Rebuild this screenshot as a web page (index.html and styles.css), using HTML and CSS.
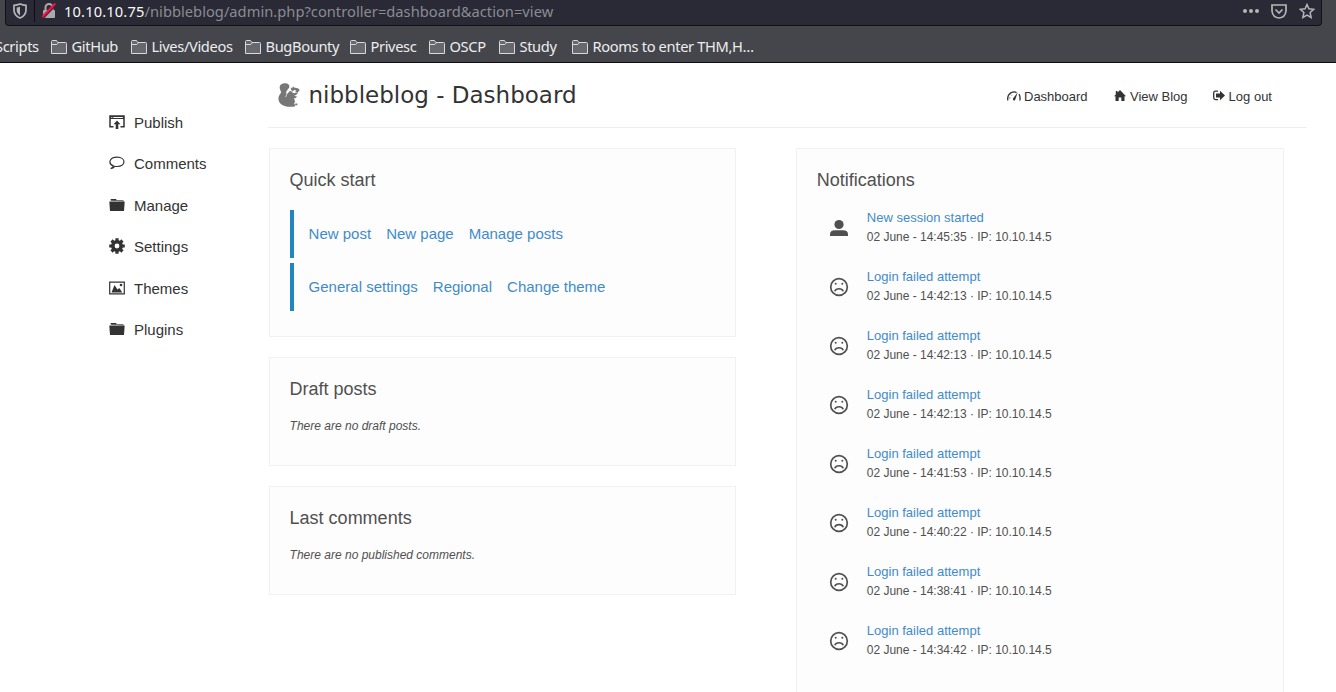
FILE: index.html
```html
<!DOCTYPE html>
<html lang="en">
<head>
<meta charset="utf-8">
<title>nibbleblog - Dashboard</title>
<link rel="stylesheet" href="styles.css">
</head>
<body>
<svg class="sprite" aria-hidden="true">
  <symbol id="dir" viewBox="0 0 16 14"><path d="M.5 13.500V1.500q0-1 1-1h4l1.300 2h7.700q1 0 1 1v10z" fill="#67686d" stroke="#d8d8da"/><path d="M.5 4.500h5.300l1.400-1.500" fill="none" stroke="#d8d8da"/></symbol>
  <symbol id="folder" viewBox="0 0 16 14"><path d="M1.500 2.500V1h5.500l1 1h6.500v1.500z" fill="#777"/><path d="M2 1h5v1.600H2zM.3 3.500h15.400L15 13H1z"/></symbol>
  <symbol id="sad" viewBox="0 0 20 20"><circle cx="10" cy="10" r="8.300" fill="none" stroke="#505050" stroke-width="1.700"/><circle cx="6.700" cy="6.800" r="1"/><circle cx="13.300" cy="6.800" r="1"/><path d="M5.800 14.200c1.200-3.300 7.200-3.300 8.400 0" fill="none" stroke="#505050" stroke-width="1.700"/></symbol>
</svg>
<div class="chrome">
  <div class="urlbar">
    <svg class="shield" viewBox="0 0 14 16"><path d="M1 2.300Q4 2.100 7 1q3 1.100 6 1.300V7q0 5.500-6 8Q1 12.500 1 7z" fill="none" stroke="#b5b5b8" stroke-width="1.700"/><path d="M7 3.700v8.700Q3.700 10.500 3.700 7V4.500Q5.500 4.300 7 3.700z" fill="#b5b5b8"/></svg>
    <span class="sep"></span>
    <svg class="lock" viewBox="0 0 16 16"><path d="M4.500 7V4.500a3.500 3.500 0 0 1 7 0V7" fill="none" stroke="#aaaaad" stroke-width="2"/><rect x="2" y="7" width="12" height="8" rx="1" fill="#aaaaad"/><path d="M2.300 15.300 15.300 1.600" stroke="#292a36" stroke-width="1.500"/><path d="M1.300 14 14.300.5" stroke="#ff0a42" stroke-width="2.200"/></svg>
    <span class="url"><b>10.10.10.75</b>/nibbleblog/admin.php?controller=dashboard&amp;action=view</span>
    <svg class="dots" viewBox="0 0 16 4"><circle cx="2" cy="2" r="2"/><circle cx="8" cy="2" r="2"/><circle cx="14" cy="2" r="2"/></svg>
    <svg class="pocket" viewBox="0 0 16 15"><path d="M1 1h14v6q-.8 6.500-7 7Q1.800 13.500 1 7zM4.500 5.500 8 9l3.500-3.500"/></svg>
    <svg class="star" viewBox="0 0 16 16"><path d="m8 1.500 1.900 4.300 4.800.5-3.600 3.200 1 4.900L8 12l-4.100 2.400 1-4.900-3.600-3.200 4.800-.5z"/></svg>
  </div>
  <div class="bookmarks">
    <span class="bm scripts">Scripts</span>
    <span class="bm github"><svg><use href="#dir"/></svg>GitHub</span>
    <span class="bm lives"><svg><use href="#dir"/></svg>Lives/Videos</span>
    <span class="bm bounty"><svg><use href="#dir"/></svg>BugBounty</span>
    <span class="bm privesc"><svg><use href="#dir"/></svg>Privesc</span>
    <span class="bm oscp"><svg><use href="#dir"/></svg>OSCP</span>
    <span class="bm study"><svg><use href="#dir"/></svg>Study</span>
    <span class="bm rooms"><svg><use href="#dir"/></svg>Rooms to enter THM,H…</span>
  </div>
</div>
<div class="page">
  <nav class="side">
    <a><svg viewBox="0 0 16 14"><path d="M4.500 11.800H1V1h14v10.800h-3.500" fill="none" stroke="#333" stroke-width="1.500"/><path d="M1 1h14v3H1z"/><path d="M2.300 2.500h1m1 0h9.500" stroke="#fff"/><path d="m8 5.500 3.500 3.700H9.300V14H6.700V9.200H4.500z"/></svg>Publish</a>
    <a><svg viewBox="0 0 16 14"><path d="M4.300 9.800C-1.400 7.500.5 1.200 8 1.200c9.300 0 9.300 9 0 9.300-1 0-1.500 0-2.200-.2-1.200 1.500-2.500 2.200-4 2.300 1.500-.9 2.300-1.600 2.500-2.800z" fill="none" stroke="#333" stroke-width="1.200"/></svg>Comments</a>
    <a><svg><use href="#folder"/></svg>Manage</a>
    <a><svg class="gear" viewBox="0 0 16 16"><circle cx="8" cy="8" r="4.200" fill="none" stroke="#333" stroke-width="3.600"/><path d="M8 .2v3M8 12.800v3M.2 8h3M12.800 8h3M2.500 2.500l2.200 2.200M11.300 11.300l2.200 2.200M13.500 2.500l-2.200 2.200M4.700 11.300l-2.200 2.200" stroke="#333" stroke-width="3.200"/></svg>Settings</a>
    <a><svg viewBox="0 0 16 14"><path d="M.7 1.200h14.600v11.600H.7z" fill="none" stroke="#333" stroke-width="1.200"/><path d="M2.500 11.500 5.500 4l3 4.500 1.800-1.500 3 4.500z"/><circle cx="12" cy="4" r="1.300"/></svg>Themes</a>
    <a><svg><use href="#folder"/></svg>Plugins</a>
  </nav>
  <main>
    <header>
      <svg class="squirrel" viewBox="0 0 22 24"><path d="M3.500 21.500C-.5 18.500-.3 13.500 2.500 10.500 4 8.500 1.800 7.500 1.700 5 1.500 1.500 4.500.2 7.500.3c3.500.2 4.800 3 3.200 5C9 7 8.300 8.800 9.300 11c1.200-2 2.700-3 3.700-3.200 1 1.700 2.500 2.700 4.500 2.200l2.700-.8c-1 2.300-2.700 3.100-4.300 3.600 1 .6 2 .5 2.900.1-.3 2-1.700 2.500-3.200 2.400 1.800 1.700 1.700 4.200.3 5.700 1.300.3 1.600 1.500.9 2.500-5 .6-9.900.6-13.300-2z"/><path d="M13 6.800 12.800 4.500l1.500.8.600-2 1.600 1.500c2.500-.3 4.600.5 5.200 2.500L19.500 9.500 17 9.200l1.200-1.400-2-1-1.400 1.700zM17.200 20.600h2.200v1.600h-2.200z"/><path d="M8.700 8C8.500 11 8.800 12.500 7.500 14" fill="none" stroke="#fff" stroke-width=".7"/></svg>
      <h1>nibbleblog - Dashboard</h1>
      <nav class="top">
        <a class="dash"><svg viewBox="0 0 14 12"><path d="M.8 10.500C-.2 2.500 7 .8 9.500 2.600M12 4.200q1.500 2.500.9 6.300" fill="none" stroke="#333" stroke-width="1.300"/><path d="M5.800 8.700 10.800 2.200 8 10.200q-1.700 1.300-2.200-1.500z"/><path d="M2.800 7.500v1M4 4.700l.7.700" stroke="#333"/></svg>Dashboard</a>
        <a class="view"><svg viewBox="0 0 12 12"><path d="M6 0 12 6.300h-1.500V11H7.300V7.500H4.700V11H1.500V6.300H0L1.800 4.500V1h1.700v1.500z"/></svg>View Blog</a>
        <a class="out"><svg viewBox="0 0 12 12"><path d="M5 1.200H2.500Q.7 1.200.7 3v4.800q0 1.800 1.800 1.800H5" fill="none" stroke="#333" stroke-width="1.300"/><path d="M3 3.500h4V.8l5 4.700-5 4.700V7.500H3z"/></svg>Log out</a>
      </nav>
    </header>
    <div class="columns">
      <div class="left">
        <section class="card quick">
          <h2>Quick start</h2>
          <div class="links"><a>New post</a><a>New page</a><a>Manage posts</a></div>
          <div class="links"><a>General settings</a><a>Regional</a><a>Change theme</a></div>
        </section>
        <section class="card small"><h2>Draft posts</h2><p>There are no draft posts.</p></section>
        <section class="card small"><h2>Last comments</h2><p>There are no published comments.</p></section>
      </div>
      <section class="card notes">
        <h2>Notifications</h2>
        <div class="note"><svg viewBox="0 0 20 20"><circle cx="10" cy="6.500" r="4.600"/><path d="M1 18v-1.800Q1 12.200 6 12.200h8q5 0 5 4V18z"/></svg><div><a>New session started</a><p>02 June - 14:45:35 · IP: 10.10.14.5</p></div></div>
        <div class="note"><svg><use href="#sad"/></svg><div><a>Login failed attempt</a><p>02 June - 14:42:13 · IP: 10.10.14.5</p></div></div>
        <div class="note"><svg><use href="#sad"/></svg><div><a>Login failed attempt</a><p>02 June - 14:42:13 · IP: 10.10.14.5</p></div></div>
        <div class="note"><svg><use href="#sad"/></svg><div><a>Login failed attempt</a><p>02 June - 14:42:13 · IP: 10.10.14.5</p></div></div>
        <div class="note"><svg><use href="#sad"/></svg><div><a>Login failed attempt</a><p>02 June - 14:41:53 · IP: 10.10.14.5</p></div></div>
        <div class="note"><svg><use href="#sad"/></svg><div><a>Login failed attempt</a><p>02 June - 14:40:22 · IP: 10.10.14.5</p></div></div>
        <div class="note"><svg><use href="#sad"/></svg><div><a>Login failed attempt</a><p>02 June - 14:38:41 · IP: 10.10.14.5</p></div></div>
        <div class="note"><svg><use href="#sad"/></svg><div><a>Login failed attempt</a><p>02 June - 14:34:42 · IP: 10.10.14.5</p></div></div>
      </section>
    </div>
  </main>
</div>
</body>
</html>
```
FILE: styles.css
```css
* { box-sizing: border-box; }
body { margin: 0; height: 692px; overflow: hidden; background: #fff; color: #333; font-family: "Liberation Sans", Arial, sans-serif; display: flex; flex-direction: column; }
h1, h2, p { margin: 0; font-weight: normal; }
svg { flex: none; fill: #333; }
.sprite { display: none; }

/* Browser bars */
.chrome { flex: none; height: 63px; background: #44464c; border-bottom: 1px solid #0c0c0d; font-family: "Noto Sans", sans-serif; white-space: nowrap; }
.urlbar { height: 26px; margin: 0 14px 0 5px; background: #292a36; border: 1px solid #111116; border-top: 0; border-radius: 0 0 4px 4px; display: flex; padding-left: 7px; }
.shield { width: 14px; height: 16px; margin-top: 3px; }
.sep { width: 1px; height: 22px; margin-left: 7px; background: #0e0e12; }
.lock { width: 16px; height: 16px; margin: 3px 7px 0 6px; }
.url { font-size: 14.67px; letter-spacing: .03px; line-height: 20px; margin-top: 1px; color: #8b8c92; flex: 1; }
.url b { font-weight: normal; letter-spacing: .15px; color: #f9f9fa; }
.dots { width: 16px; height: 4px; margin: 9px 12px 0 0; fill: #b5b5b8; }
.pocket { width: 16px; height: 15px; margin: 3.500px 12px 0 0; fill: none; stroke: #b5b5b8; stroke-width: 1.700; }
.star { width: 16px; height: 16px; margin: 3px 6px 0 0; fill: none; stroke: #b5b5b8; stroke-width: 1.500; }
.bookmarks { display: flex; height: 36px; align-items: center; padding-top: 4px; font-size: 14.67px; letter-spacing: -.36px; line-height: 20px; color: #ededef; }
.bm { display: flex; align-items: center; flex: none; }
.bm svg { width: 16px; height: 14px; margin: 1px 4.500px 0 0; }
.scripts { width: 51px; text-indent: -5px; }
.github { width: 80px; }
.lives { width: 114px; }
.bounty { width: 105px; }
.privesc { width: 79px; }
.oscp { width: 70px; }
.study { width: 73px; }

/* Page */
.page { display: flex; flex: 1; min-height: 0; }
.side { width: 268px; padding: 38.600px 0 0 108.500px; flex: none; }
.side a { display: flex; align-items: center; height: 41.460px; font-size: 15px; }
.side svg { width: 16px; height: 14px; margin: -1px 9.500px 0 0; }
.side .gear { height: 16px; margin-top: -2px; }
main { width: 1039px; display: flex; flex-direction: column; }
header { height: 65px; flex: none; border-bottom: 1px solid #eee; display: flex; padding: 0 0 0 10px; }
.squirrel { width: 22px; height: 24px; margin-top: 20px; fill: #777; }
h1 { flex: none; width: 707px; padding: 17px 0 0 8.500px; font: 23px/30px "DejaVu Sans", sans-serif; white-space: nowrap; }
.top { display: flex; font-size: 13px; line-height: 16px; padding-top: 26px; white-space: nowrap; }
.top a { display: flex; flex: none; }
.top svg { width: 12px; height: 12px; margin: 1px 4px 0 0; }
.dash { width: 107px; }
.top .dash svg { width: 14px; margin-right: 3px; }
.view { width: 98.600px; }
.columns { display: flex; align-items: flex-start; padding: 20px 0 0 1px; gap: 60px; }
.left { width: 467px; display: flex; flex-direction: column; gap: 20px; }
.card { background: #fdfdfd; border: 1px solid #f1f1f1; padding: 20px 20px 20px 19.600px; color: #505050; }
.card h2 { font-size: 18px; line-height: 22px; }
.card a { color: #428bca; }
.quick { height: 189px; }
.links { height: 48px; margin-top: 5px; border-left: 4px solid #2086bf; padding: 0 0 2px 15px; display: flex; align-items: center; gap: 15px; font-size: 15px; }
.quick h2 + .links { margin-top: 19px; }
.small { height: 109px; }
.small p { font-size: 12px; line-height: 16px; font-style: italic; margin-top: 18px; }
.notes { width: 488px; height: 570px; padding-left: 19.800px; }
.notes h2 { margin-bottom: 17px; }
.note { display: flex; height: 59px; padding-left: 12px; font-size: 13px; line-height: 19px; }
.note svg { width: 20px; height: 20px; margin: 10px 18px 0 0; fill: #505050; }
.note p { font-size: 12px; line-height: 21px; letter-spacing: -.015px; }
```
